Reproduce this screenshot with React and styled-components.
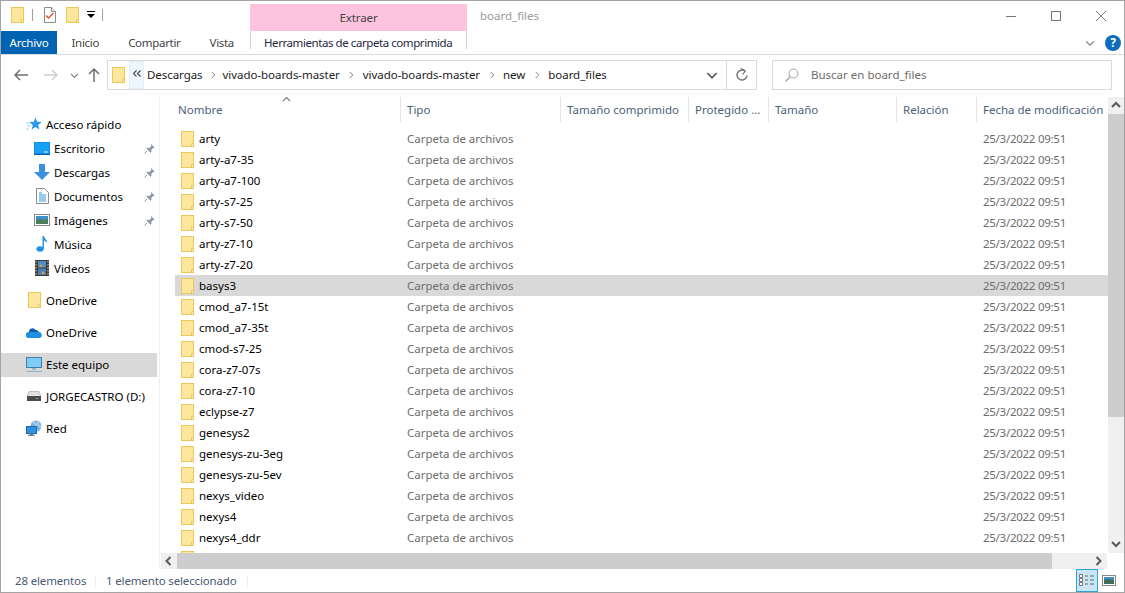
import styled, { createGlobalStyle } from "styled-components";

const FOLDERS = [
  "arty", "arty-a7-35", "arty-a7-100", "arty-s7-25", "arty-s7-50", "arty-z7-10", "arty-z7-20",
  "basys3", "cmod_a7-15t", "cmod_a7-35t", "cmod-s7-25", "cora-z7-07s", "cora-z7-10", "eclypse-z7",
  "genesys2", "genesys-zu-3eg", "genesys-zu-5ev", "nexys_video", "nexys4", "nexys4_ddr",
];
const CRUMBS = ["Descargas", "vivado-boards-master", "vivado-boards-master", "new", "board_files"];
const COLUMNS = ["Tipo", "Tamaño comprimido", "Protegido ...", "Tamaño", "Relación", "Fecha de modificación"];
const GRID = "225px 160px 128px 80px 128px 80px 1fr";

const GlobalStyle = createGlobalStyle`
  html, body { margin: 0; padding: 0; background: #fff; }
  * { box-sizing: border-box; }
`;

const Folder = () => (
  <svg width="13" height="16" viewBox="0 0 13 16">
    <rect x="0.5" y="0.5" width="12" height="15" fill="#fee79c" stroke="#ecc85c" />
    <path d="M10.5 15.5v-3h2" fill="#fff3c8" stroke="#ecc85c" />
  </svg>
);

const Pin = () => (
  <svg width="11" height="11" viewBox="0 0 11 11">
    <path d="M6.5 0.5l4 4-1.2.5-2 2 .2 2-1 .8-4-4 .8-1 2 .2 2-2z" fill="#8f9aa5" />
    <path d="M3 8l-2.500 2.500" stroke="#8f9aa5" fill="none" />
  </svg>
);

const Star = () => (
  <svg width="16" height="15" viewBox="0 0 16 15">
    <path d="M9.5 0.5l1.700 4.300 4.600.3-3.600 2.900 1.200 4.600-3.900-2.500-3.900 2.500 1.200-4.600L3.200 5.100l4.600-.3z" fill="#2f9be8" />
    <path d="M0 6h3M1 9h3M0 12h3" stroke="#9ccff2" />
  </svg>
);

const Desktop = () => (
  <svg width="16" height="13" viewBox="0 0 16 13">
    <rect x="0" y="0" width="16" height="12" fill="#0f8ceb" />
    <rect x="1" y="1" width="14" height="10" fill="#18a0f5" />
    <path d="M0 12.5h16" stroke="#0a5fa8" />
    <path d="M10 10h4" stroke="#d6efff" />
  </svg>
);

const DownArrow = () => (
  <svg width="16" height="16" viewBox="0 0 16 16">
    <path d="M5 0h6v8h5l-8 8-8-8h5z" fill="#3d8fdd" />
  </svg>
);

const Doc = () => (
  <svg width="13" height="16" viewBox="0 0 13 16">
    <path d="M0.5 0.5h8l4 4v11h-12z" fill="#fff" stroke="#8b8b8b" />
    <path d="M3 5h3M3 7h7M3 9h7M3 11h7M3 13h7" stroke="#3a9ad9" />
  </svg>
);

const Picture = () => (
  <svg width="16" height="12" viewBox="0 0 16 12">
    <rect x="0.5" y="0.5" width="15" height="11" fill="#fff" stroke="#8b8b8b" />
    <rect x="2" y="2" width="12" height="4" fill="#3f8fc9" />
    <path d="M2 6l4-1 4 1 4-1v5H2z" fill="#4c7d5c" />
  </svg>
);

const Note = () => (
  <svg width="12" height="16" viewBox="0 0 12 16">
    <ellipse cx="4" cy="13" rx="3.6" ry="2.8" fill="#1e90e8" />
    <path d="M6.5 13V0h1.400c.3 2.500 3.600 3.500 3 7-.8-1.600-2-2.400-3-2.600V13z" fill="#1e90e8" />
  </svg>
);

const Film = () => (
  <svg width="14" height="16" viewBox="0 0 14 16">
    <rect width="14" height="16" fill="#3d3d3d" />
    <path d="M1 1v14M13 1v14" stroke="#cfcfcf" strokeDasharray="1.5 1.5" />
    <rect x="3" y="1" width="8" height="6.5" fill="#4d8fc7" />
    <rect x="3" y="8.5" width="8" height="6.5" fill="#4d7fb5" />
    <path d="M4 7l2-3 2 3zM6 14l2-3 2 3z" fill="#e0a030" />
  </svg>
);

const Cloud = () => (
  <svg width="16" height="11" viewBox="0 0 16 11">
    <path d="M3 5a3.5 3.5 0 0 1 6.5-2A3 3 0 0 1 13 6H3z" fill="#0f5fb0" />
    <path d="M3 11a3 3 0 0 1-.5-6h10a3 3 0 0 1 .5 6z" fill="#1e90e0" />
  </svg>
);

const Computer = () => (
  <svg width="16" height="15" viewBox="0 0 16 15">
    <rect x="0.5" y="0.5" width="15" height="10" fill="#7ecbf5" stroke="#3f7fa8" />
    <path d="M6 11h4v2H6z" fill="#9fb8c8" />
    <path d="M0 14.5h16" stroke="#8fb0c8" />
  </svg>
);

const Drive = () => (
  <svg width="14" height="10" viewBox="0 0 14 10">
    <path d="M2 0.5h10l2 5H0z" fill="#e2e2e2" stroke="#bdbdbd" />
    <rect y="5" width="14" height="5" fill="#4b4b4b" />
    <rect x="9" y="7" width="2" height="1" fill="#42d060" />
  </svg>
);

const Network = () => (
  <svg width="16" height="16" viewBox="0 0 16 16">
    <circle cx="10" cy="6" r="5.5" fill="#7fb4dc" />
    <path d="M7 2c2 1 4 3 3 6M12 2c-1 2 0 4 3 5" stroke="#e8f3fb" fill="none" />
    <rect x="0.5" y="6.5" width="10" height="7" fill="#2f8fe0" stroke="#1b6cb0" />
    <path d="M4 14h3v1H4zM2 15.5h7" stroke="#6f8fa8" />
  </svg>
);

const CheckDoc = () => (
  <svg width="12" height="16" viewBox="0 0 12 16">
    <path d="M0.5 0.5h7l4 4v11h-11z" fill="#fff" stroke="#8b8b8b" />
    <path d="M7.5 0.5v4h4" fill="#eee" stroke="#8b8b8b" />
    <path d="M2 8.500l2.500 2.500 5-5" fill="none" stroke="#e8562a" strokeWidth="1.5" />
  </svg>
);

const DoubleChevron = () => (
  <svg width="8" height="7" viewBox="0 0 8 7">
    <path d="M3.500 0.500l-3 3 3 3M7.500 0.500l-3 3 3 3" fill="none" stroke="#444" strokeWidth="1.1" />
  </svg>
);

const Chevron = ({ dir = "down", color = "#808080", size = 9, weight = 1.1 }) => {
  const d = { down: "M1 3l3.500 3.500L8 3", up: "M1 6l3.500-3.500L8 6", right: "M3 1l3.500 3.500L3 8", left: "M6 1L2.500 4.500 6 8" };
  return (
    <svg width={size} height={size} viewBox="0 0 9 9">
      <path d={d[dir]} fill="none" stroke={color} strokeWidth={weight} />
    </svg>
  );
};

const ScrollArrow = ({ dir }) => {
  const d = { up: "M1 6l4-4 4 4", down: "M1 2l4 4 4-4", left: "M6.500 1l-4 4 4 4", right: "M2.500 1l4 4-4 4" };
  return (
    <svg width="10" height="10" viewBox="0 0 10 10">
      <path d={d[dir]} fill="none" stroke="#5a5a5a" strokeWidth="2" />
    </svg>
  );
};

const Window = styled.div`
  width: 1125px;
  height: 593px;
  display: flex;
  flex-direction: column;
  border: 1px solid #a3a3a3;
  background: #fff;
  font-family: "Noto Sans", "Open Sans", sans-serif;
  font-size: 11.5px;
  color: #000;
  overflow: hidden;
`;

const TitleBar = styled.div`
  height: 30px;
  flex: none;
  display: flex;
`;

const QuickAccess = styled.div`
  width: 249px;
  padding-left: 10px;
  padding-bottom: 2px;
  display: flex;
  align-items: center;
`;

const QuickSlot = styled.span`
  display: flex;
  align-items: center;
  margin-right: ${(p) => p.$gap}px;
`;

const QuickSep = styled.span`
  width: 1px;
  height: 12px;
  background: #a0a0a0;
  margin-right: ${(p) => p.$gap}px;
`;

const DropGlyph = styled.span`
  width: 8px;
  height: 8px;
  border-top: 1px solid #000;
  position: relative;
  &::after {
    content: "";
    position: absolute;
    left: 0;
    top: 2px;
    border: 4px solid transparent;
    border-top: 4px solid #000;
    border-bottom: 0;
  }
`;

const ExtractTab = styled.div`
  width: 217px;
  margin-top: 3px;
  padding-bottom: 1px;
  background: #ffc4dd;
  color: #444;
  letter-spacing: -0.1px;
  display: flex;
  align-items: center;
  justify-content: center;
`;

const WindowTitle = styled.div`
  margin-left: 13px;
  color: #9a9a9a;
  line-height: 30px;
`;

const WindowControls = styled.div`
  margin-left: auto;
  display: flex;
  align-items: center;
  padding-right: 18px;
  padding-bottom: 1px;
  gap: 35px;
`;

const RibbonRow = styled.div`
  height: 24px;
  flex: none;
  display: flex;
  border-bottom: 1px solid #dadada;
`;

const RibbonTabs = styled.div`
  width: 249px;
  display: flex;
`;

const FileTab = styled.div`
  width: 56px;
  background: #0063b1;
  color: #fff;
  letter-spacing: -0.2px;
  display: flex;
  align-items: center;
  justify-content: center;
`;

const RibbonTab = styled.div`
  padding: 0 14.5px;
  color: #444;
  letter-spacing: -0.3px;
  display: flex;
  align-items: center;
`;

const ToolsTab = styled.div`
  width: 217px;
  height: 18px;
  border-left: 1px solid #cfcfcf;
  border-right: 1px solid #cfcfcf;
  padding-left: 13px;
  color: #262640;
  line-height: 24px;
  letter-spacing: -0.43px;
  white-space: nowrap;
`;

const RibbonRight = styled.div`
  margin-left: auto;
  display: flex;
  align-items: center;
  gap: 10px;
  padding-right: 3px;
`;

const Help = styled.span`
  width: 16px;
  height: 16px;
  border-radius: 50%;
  background: #0f6cbd;
  color: #fff;
  font-weight: 700;
  font-size: 12px;
  display: flex;
  align-items: center;
  justify-content: center;
`;

const AddressRow = styled.div`
  height: 42px;
  flex: none;
  padding-top: 5px;
  display: flex;
`;

const NavGroup = styled.div`
  width: 106px;
  height: 30px;
  padding-left: 5px;
  display: grid;
  grid-template-columns: 30px 30px 16px 24px;
  align-items: center;
  justify-items: center;
`;

const AddressBar = styled.div`
  width: 650px;
  height: 30px;
  border: 1px solid #d9d9d9;
  display: flex;
  align-items: center;
  padding-left: 4px;
`;

const RecentButton = styled.span`
  width: 15px;
  height: 28px;
  margin-left: 4px;
  margin-right: 3px;
  padding-bottom: 4px;
  background: #eef6fd;
  border: 1px solid #e3effa;
  display: flex;
  align-items: center;
  justify-content: center;
`;

const Crumb = styled.span`
  color: #222;
  white-space: nowrap;
  padding-bottom: 2px;
  letter-spacing: -0.05px;
`;

const CrumbSep = styled.span`
  width: ${(p) => p.$w}px;
  display: flex;
  justify-content: center;
`;

const AddressEnd = styled.div`
  margin-left: auto;
  display: flex;
  align-items: center;
  height: 100%;
`;

const DropSlot = styled.span`
  width: 28px;
  display: flex;
  justify-content: center;
`;

const RefreshSlot = styled.span`
  width: 30px;
  height: 100%;
  border-left: 1px solid #d9d9d9;
  display: flex;
  align-items: center;
  justify-content: center;
`;

const SearchBox = styled.div`
  width: 340px;
  height: 30px;
  margin-left: 15px;
  border: 1px solid #d9d9d9;
  padding-left: 12px;
  display: flex;
  align-items: center;
  gap: 12px;
  color: #6d6d6d;
`;

const SearchLabel = styled.span`
  padding-bottom: 2px;
`;

const Main = styled.div`
  flex: 1;
  min-height: 0;
  display: flex;
`;

const Sidebar = styled.nav`
  width: 159px;
  flex: none;
  padding-top: 16px;
  border-right: 1px solid #efefef;
`;

const NavSection = styled.div`
  margin-bottom: 8px;
`;

const NavItem = styled.div`
  height: 24px;
  width: 156px;
  padding-left: ${(p) => (p.$nested ? 33 : 25)}px;
  padding-right: 2px;
  padding-bottom: 2px;
  display: flex;
  align-items: center;
  background: ${(p) => (p.$active ? "#d9d9d9" : "transparent")};
`;

const NavIcon = styled.span`
  width: 16px;
  margin-right: 4px;
  display: flex;
  justify-content: center;
`;

const PinSlot = styled.span`
  margin-left: auto;
  display: flex;
`;

const Content = styled.div`
  flex: 1;
  min-width: 0;
  display: flex;
  flex-direction: column;
`;

const ListArea = styled.div`
  flex: 1;
  min-height: 0;
  display: flex;
`;

const ListPane = styled.div`
  flex: 1;
  min-width: 0;
  padding-left: 15px;
  overflow: hidden;
`;

const HeaderRow = styled.div`
  height: 25px;
  margin-bottom: 6px;
  display: grid;
  grid-template-columns: ${GRID};
`;

const HeaderCell = styled.div`
  position: relative;
  padding-left: ${(p) => (p.$first ? 3 : 6)}px;
  border-left: ${(p) => (p.$first ? "none" : "1px solid #e5e5e5")};
  color: #4c607a;
  line-height: 25px;
  white-space: nowrap;
  overflow: hidden;
`;

const SortCaret = styled.span`
  position: absolute;
  left: 107px;
  top: -2px;
  display: flex;
`;

const FileRow = styled.div`
  height: 21px;
  display: grid;
  grid-template-columns: ${GRID};
  align-items: center;
  background: ${(p) => (p.$selected ? "#d9d9d9" : "transparent")};
`;

const NameCell = styled.div`
  display: flex;
  align-items: center;
  padding-left: 6px;
  gap: 5px;
`;

const TypeCell = styled.div`
  padding-left: 7px;
  color: #6d6d6d;
  white-space: nowrap;
  letter-spacing: -0.03px;
`;

const DateCell = styled.div`
  grid-column: 7;
  padding-left: 7px;
  color: #6d6d6d;
  white-space: nowrap;
  letter-spacing: -0.27px;
`;

const VScroll = styled.div`
  width: 16px;
  flex: none;
  background: #f0f0f0;
  display: flex;
  flex-direction: column;
`;

const HScroll = styled.div`
  height: 16px;
  flex: none;
  margin-left: 1px;
  margin-right: 17px;
  background: #f0f0f0;
  display: flex;
`;

const ArrowBox = styled.span`
  width: 16px;
  height: ${(p) => (p.$h ? `${p.$h}px` : "auto")};
  flex: none;
  display: flex;
  align-items: center;
  justify-content: center;
  background: #f0f0f0;
`;

const VThumb = styled.div`
  height: 303px;
  background: #cdcdcd;
`;

const ScrollFill = styled.div`
  flex: 1;
`;

const HThumb = styled.div`
  width: 875px;
  background: #cdcdcd;
`;

const StatusBar = styled.div`
  height: 23px;
  flex: none;
  display: flex;
  align-items: center;
  color: #4a5a70;
  letter-spacing: -0.15px;
`;

const StatusCell = styled.div`
  padding-left: ${(p) => p.$pad}px;
  width: ${(p) => p.$w}px;
  height: 12px;
  line-height: 12px;
  border-right: 1px solid #ececec;
  white-space: nowrap;
`;

const ViewButtons = styled.div`
  margin-left: auto;
  margin-right: 8px;
  display: flex;
  align-items: center;
  gap: 4px;
`;

const ViewButton = styled.span`
  width: ${(p) => (p.$active ? 22 : 14)}px;
  height: 23px;
  display: flex;
  align-items: center;
  justify-content: center;
  background: ${(p) => (p.$active ? "#c9e6f6" : "transparent")};
  border: ${(p) => (p.$active ? "1px solid #2f9fd8" : "none")};
`;

const App = () => {
  return (
    <>
      <GlobalStyle />
      <Window>
        <TitleBar>
          <QuickAccess>
            <QuickSlot $gap={8}><Folder /></QuickSlot>
            <QuickSep $gap={11} />
            <QuickSlot $gap={10}><CheckDoc /></QuickSlot>
            <QuickSlot $gap={8}><Folder /></QuickSlot>
            <QuickSlot $gap={7}><DropGlyph /></QuickSlot>
            <QuickSep $gap={0} />
          </QuickAccess>
          <ExtractTab>Extraer</ExtractTab>
          <WindowTitle>board_files</WindowTitle>
          <WindowControls>
            <svg width="10" height="10" viewBox="0 0 10 10"><path d="M0 5.5h10" stroke="#777" /></svg>
            <svg width="10" height="10" viewBox="0 0 10 10"><rect x="0.5" y="0.5" width="9" height="9" fill="none" stroke="#777" /></svg>
            <svg width="10" height="10" viewBox="0 0 10 10"><path d="M0 0l10 10M10 0L0 10" stroke="#777" /></svg>
          </WindowControls>
        </TitleBar>

        <RibbonRow>
          <RibbonTabs>
            <FileTab>Archivo</FileTab>
            <RibbonTab>Inicio</RibbonTab>
            <RibbonTab>Compartir</RibbonTab>
            <RibbonTab>Vista</RibbonTab>
          </RibbonTabs>
          <ToolsTab>Herramientas de carpeta comprimida</ToolsTab>
          <RibbonRight>
            <Chevron size={10} />
            <Help>?</Help>
          </RibbonRight>
        </RibbonRow>

        <AddressRow>
          <NavGroup>
            <svg width="14" height="12" viewBox="0 0 14 12"><path d="M6 1L1 6l5 5M1 6h13" fill="none" stroke="#707070" strokeWidth="1.5" /></svg>
            <svg width="14" height="12" viewBox="0 0 14 12"><path d="M8 1l5 5-5 5M13 6H0" fill="none" stroke="#d0d0d0" strokeWidth="1.5" /></svg>
            <Chevron />
            <svg width="12" height="14" viewBox="0 0 12 14"><path d="M1 6l5-5 5 5M6 1v13" fill="none" stroke="#707070" strokeWidth="1.5" /></svg>
          </NavGroup>
          <AddressBar>
            <Folder />
            <RecentButton><DoubleChevron /></RecentButton>
            {CRUMBS.map((c, i) => (
              <span key={i} style={{ display: "contents" }}>
                <Crumb>{c}</Crumb>
                {i < CRUMBS.length - 1 && (
                  <CrumbSep $w={i === 0 ? 20 : 23}><Chevron dir="right" size={8} /></CrumbSep>
                )}
              </span>
            ))}
            <AddressEnd>
              <DropSlot><Chevron size={12} color="#606060" weight={1.3} /></DropSlot>
              <RefreshSlot>
                <svg width="14" height="14" viewBox="0 0 14 14">
                  <path d="M12 7.500a5 5 0 1 1-2-4.500" fill="none" stroke="#777" strokeWidth="1.5" />
                  <path d="M5.800 0.500L10.200 3 7.800 6.500" fill="none" stroke="#777" strokeWidth="1.3" />
                </svg>
              </RefreshSlot>
            </AddressEnd>
          </AddressBar>
          <SearchBox>
            <svg width="14" height="14" viewBox="0 0 14 14">
              <circle cx="8.500" cy="5.500" r="4.500" fill="none" stroke="#a0a0a0" />
              <path d="M5.200 8.800L0.500 13.500" stroke="#a0a0a0" strokeWidth="1.3" />
            </svg>
            <SearchLabel>Buscar en board_files</SearchLabel>
          </SearchBox>
        </AddressRow>

        <Main>
          <Sidebar>
            <NavSection>
              <NavItem><NavIcon><Star /></NavIcon>Acceso rápido</NavItem>
              <NavItem $nested><NavIcon><Desktop /></NavIcon>Escritorio<PinSlot><Pin /></PinSlot></NavItem>
              <NavItem $nested><NavIcon><DownArrow /></NavIcon>Descargas<PinSlot><Pin /></PinSlot></NavItem>
              <NavItem $nested><NavIcon><Doc /></NavIcon>Documentos<PinSlot><Pin /></PinSlot></NavItem>
              <NavItem $nested><NavIcon><Picture /></NavIcon>Imágenes<PinSlot><Pin /></PinSlot></NavItem>
              <NavItem $nested><NavIcon><Note /></NavIcon>Música</NavItem>
              <NavItem $nested><NavIcon><Film /></NavIcon>Videos</NavItem>
            </NavSection>
            <NavSection><NavItem><NavIcon><Folder /></NavIcon>OneDrive</NavItem></NavSection>
            <NavSection><NavItem><NavIcon><Cloud /></NavIcon>OneDrive</NavItem></NavSection>
            <NavSection><NavItem $active><NavIcon><Computer /></NavIcon>Este equipo</NavItem></NavSection>
            <NavSection><NavItem><NavIcon><Drive /></NavIcon>JORGECASTRO (D:)</NavItem></NavSection>
            <NavSection><NavItem><NavIcon><Network /></NavIcon>Red</NavItem></NavSection>
          </Sidebar>

          <Content>
            <ListArea>
              <ListPane>
                <HeaderRow>
                  <HeaderCell $first>
                    Nombre
                    <SortCaret><Chevron dir="up" color="#7a7a7a" size={9} /></SortCaret>
                  </HeaderCell>
                  {COLUMNS.map((c) => <HeaderCell key={c}>{c}</HeaderCell>)}
                </HeaderRow>
                {FOLDERS.map((name) => (
                  <FileRow key={name} $selected={name === "basys3"}>
                    <NameCell><Folder />{name}</NameCell>
                    <TypeCell>Carpeta de archivos</TypeCell>
                    <DateCell>25/3/2022 09:51</DateCell>
                  </FileRow>
                ))}
                <FileRow><NameCell><Folder /></NameCell></FileRow>
              </ListPane>
              <VScroll>
                <ArrowBox $h={17}><ScrollArrow dir="up" /></ArrowBox>
                <VThumb />
                <ScrollFill />
                <ArrowBox $h={17}><ScrollArrow dir="down" /></ArrowBox>
              </VScroll>
            </ListArea>
            <HScroll>
              <ArrowBox><ScrollArrow dir="left" /></ArrowBox>
              <HThumb />
              <ScrollFill />
              <ArrowBox><ScrollArrow dir="right" /></ArrowBox>
            </HScroll>
          </Content>
        </Main>

        <StatusBar>
          <StatusCell $pad={14} $w={95}>28 elementos</StatusCell>
          <StatusCell $pad={10} $w={152}>1 elemento seleccionado</StatusCell>
          <ViewButtons>
            <ViewButton $active>
              <svg width="16" height="13" viewBox="0 0 16 13">
                <path d="M0.500 0.500h3v3h-3zM0.500 4.500h3v3h-3zM0.500 8.500h3v3h-3z" fill="#fff" stroke="#777" />
                <path d="M6 2h3M11 2h4M6 6h3M11 6h4M6 10h3M11 10h4" stroke="#666" />
              </svg>
            </ViewButton>
            <ViewButton>
              <svg width="14" height="11" viewBox="0 0 14 11">
                <rect x="0.5" y="0.5" width="13" height="10" fill="#fff" stroke="#888" />
                <rect x="2" y="2" width="10" height="3" fill="#3f8fc9" />
                <path d="M2 5l4-1 6 1v4H2z" fill="#3f6f5c" />
              </svg>
            </ViewButton>
          </ViewButtons>
        </StatusBar>
      </Window>
    </>
  );
};

export default App;
